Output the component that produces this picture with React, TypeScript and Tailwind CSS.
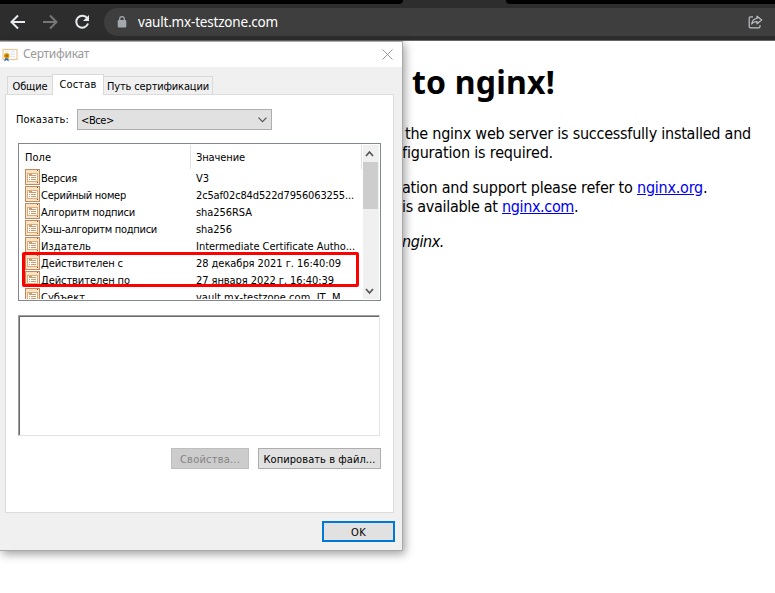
import { useLayoutEffect, useRef, useState } from "react";

// Text whose letter spacing is adjusted so that it fills a given width.
function Fit({ text, width, className = "" }: { text: string; width: number; className?: string }) {
  const ref = useRef<HTMLSpanElement>(null);
  const [spacing, setSpacing] = useState(0);
  useLayoutEffect(() => {
    const natural = ref.current!.getBoundingClientRect().width;
    setSpacing((width - natural) / text.length);
  }, [text, width]);
  return (
    <span ref={ref} className={"inline-block shrink-0 whitespace-pre " + className} style={{ letterSpacing: spacing }}>
      {text}
    </span>
  );
}

const rows: [string, number, string, number][] = [
  ["Версия", 36, "V3", 13],
  ["Серийный номер", 85, "2c5af02c84d522d7956063255...", 158],
  ["Алгоритм подписи", 94, "sha256RSA", 56],
  ["Хэш-алгоритм подписи", 116, "sha256", 36],
  ["Издатель", 50, "Intermediate Certificate Autho...", 159],
  ["Действителен с", 82, "28 декабря 2021 г. 16:40:09", 145],
  ["Действителен по", 89, "27 января 2022 г. 16:40:39", 138],
  ["Субъект", 44, "vault.mx-testzone.com, IT, M...", 154],
];

function FieldIcon() {
  return (
    <svg className="h-4 w-[15px] shrink-0" viewBox="0 0 15 16" shapeRendering="crispEdges">
      <rect width="15" height="16" rx="1" fill="#b98c63" />
      <rect x="1" y="1" width="13" height="2" fill="#ffe1bd" />
      <rect x="12" y="1" width="1" height="1" fill="#8e5128" />
      <rect x="1" y="3" width="13" height="12" fill="#fbe3c8" />
      <rect x="2" y="4" width="11" height="9" fill="#d9ab7b" />
      <rect x="3" y="5" width="9" height="7" fill="#fffaf2" />
      <path d="M4 5h3v1H4zM4 6h7v1H4zM4 8h1v1H4zM6 8h5v1H6zM4 10h1v1H4zM6 10h5v1H6z" fill="#c79b73" />
      <rect x="12" y="13" width="1" height="1" fill="#8e5128" />
    </svg>
  );
}

function CertificateIcon() {
  return (
    <svg className="mt-[6px] ml-[2px] h-[14px] w-4" viewBox="0 0 16 14">
      <rect x="1" y="1.5" width="14" height="10" fill="#fff" stroke="#e8c99c" strokeWidth="1.2" />
      <path d="M3 3.5h4M8.500 3.5H13M8 6h5M8 8.5h5" stroke="#e6e8ed" strokeWidth="1.3" />
      <path d="M3.4 8.500 2.200 13.500l2.300-1.500 2.300 1.500-.9-5z" fill="#286bc0" />
      <circle cx="4.7" cy="7.7" r="2.8" fill="#e0a000" />
      <circle cx="4.8" cy="7.8" r="1.4" fill="#a06a12" />
    </svg>
  );
}

function Toolbar() {
  return (
    <header className="h-[41px] bg-[#2d2d2d]">
      <div className="flex h-1 justify-between">
        <div className="w-[403px] rounded-br-[4px] bg-black" />
        <div className="w-[269px] rounded-bl-[4px] bg-black" />
      </div>
      <div className="flex h-[37px] items-center border-b border-[#666]">
        <svg className="ml-[10px] h-4 w-4" viewBox="0 0 16 16" fill="none" stroke="#e8eaed" strokeWidth="2">
          <path d="M15 8H2M8 1.5 1.5 8 8 14.5" />
        </svg>
        <svg className="ml-4 h-4 w-4" viewBox="0 0 16 16" fill="none" stroke="#777777" strokeWidth="2">
          <path d="M1 8h13M8 1.5 14.5 8 8 14.5" />
        </svg>
        <svg className="ml-4 h-4 w-4" viewBox="0 0 16 16">
          <path d="M13.2 4.2A6 6 0 1 0 14 9.5" fill="none" stroke="#e8eaed" strokeWidth="2" />
          <path d="M15 1v6H9z" fill="#e8eaed" />
        </svg>
        <div className="ml-[14px] flex h-7 flex-1 items-center rounded-l-full bg-[#3e3e3e]">
          <svg className="ml-[13px] h-3 w-[10px]" viewBox="0 0 10 12">
            <path d="M2.7 5V3a2.3 2.3 0 0 1 4.6 0v2" fill="none" stroke="#a4a8ad" strokeWidth="1.3" />
            <rect x=".7" y="4" width="8.6" height="7.5" rx="1" fill="#a4a8ad" />
          </svg>
          <Fit text="vault.mx-testzone.com" width={140} className="ml-[11px] font-['Noto_Sans'] text-[13.5px] leading-5 text-white" />
          <svg className="mr-[12px] ml-auto h-[14px] w-[15px]" viewBox="0 0 15 14" fill="none" stroke="#bfc1c4" strokeWidth="1.2" strokeLinejoin="round">
            <path d="M5 1.8H2.5Q1.2 1.8 1.2 3v8.5q0 1.3 1.3 1.3h8.2q1.3 0 1.3-1.3V10" />
            <path d="M9 1.2 13.7 5 9 8.8V6.7Q5.3 6.4 3.7 9q.5-4.9 5.3-5.5z" />
          </svg>
        </div>
      </div>
    </header>
  );
}

function PageText() {
  return (
    <main className="flex-1 pl-[402px] font-['DejaVu_Sans_Condensed','DejaVu_Sans',sans-serif] text-[16px] leading-[19px] text-black [font-stretch:condensed]">
      <h1 className="pt-[21px] pl-[10px] font-['Noto_Sans',sans-serif] text-[32px] leading-[39px] font-bold [font-stretch:normal]">
        <Fit text="to nginx!" width={143} />
      </h1>
      <p className="mt-[23px] flex flex-col items-start">
        <Fit text="the nginx web server is successfully installed and" width={346} className="ml-[3px]" />
        <Fit text="figuration is required." width={151} />
      </p>
      <p className="mt-4">
        <span className="flex">
          <Fit text="ation and support please refer to " width={235} />
          <a href="#" className="text-[#0000ee] underline"><Fit text="nginx.org" width={66} className="underline" /></a>.
        </span>
        <span className="flex">
          <Fit text="is available at " width={100} />
          <a href="#" className="text-[#0000ee] underline"><Fit text="nginx.com" width={72} className="underline" /></a>.
        </span>
      </p>
      <p className="mt-4 flex italic"><Fit text="nginx." width={42} /></p>
    </main>
  );
}

function Dialog() {
  return (
    <section className="absolute top-[41px] left-0 flex h-[510px] w-[403px] flex-col border-t border-r border-b border-[#a9a9a9] bg-[#f0f0f0] font-['DejaVu_Sans_Condensed','DejaVu_Sans',sans-serif] text-[11px] leading-[17px] text-black shadow-[2px_3px_9px_rgba(0,0,0,0.38)] [font-stretch:condensed]">
      <div className="flex h-[25px] shrink-0 bg-white">
        <CertificateIcon />
        <Fit text="Сертификат" width={66} className="ml-[5px] font-['Noto_Sans'] text-[12px] leading-[24px] text-[#999]" />
        <svg className="mt-[7px] mr-[9px] ml-auto h-[11px] w-[11px]" viewBox="0 0 11 11" stroke="#999" strokeWidth="1">
          <path d="m.5.5 10 10M10.500.5.5 10.5" />
        </svg>
      </div>
      <div className="relative z-10 mt-[7px] flex h-[21px] shrink-0 items-end pl-[7px]">
        <div className="mb-px flex h-[18px] w-[45px] justify-center border-t border-l border-[#d9d9d9] pt-px"><Fit text="Общие" width={35} /></div>
        <div className="flex h-[21px] w-[52px] justify-center border-x border-t border-[#d9d9d9] bg-white pt-px"><Fit text="Состав" width={37} /></div>
        <div className="mb-px flex h-[18px] w-[109px] justify-center border-t border-r border-[#d9d9d9] pt-px"><Fit text="Путь сертификации" width={102} /></div>
      </div>
      <div className="-mt-px ml-[5px] flex h-[419px] w-[389px] shrink-0 flex-col border border-[#dcdcdc] bg-white pl-[12px]">
        <div className="mt-[14px] flex h-[21px] items-center">
          <Fit text="Показать:" width={53} className="-ml-[2px]" />
          <div className="ml-[8px] flex h-[21px] w-[195px] items-center border border-[#adadad] bg-[#e1e1e1] pr-1 pl-[3px]">
            <Fit text="<Все>" width={33} className="pt-px" />
            <svg className="ml-auto h-[6px] w-[9px]" viewBox="0 0 9 6" fill="none" stroke="#555" strokeWidth="1.2"><path d="m.5.7 4 4 4-4" /></svg>
          </div>
        </div>
        <div className="relative mt-[13px] h-[158px] w-[363px] shrink-0 border border-[#828790]">
          <div className="flex h-[156px] p-px">
            <div className="h-full w-[343px] overflow-hidden">
              <div className="flex h-6">
                <div className="w-[171px] border-r border-[#e2e2e2] pt-[4px] pl-[5px]"><Fit text="Поле" width={26} /></div>
                <div className="w-[171px] border-r border-[#e2e2e2] pt-[4px] pl-[5px]"><Fit text="Значение" width={49} /></div>
              </div>
              {rows.map(([name, nameWidth, value, valueWidth]) => (
                <div key={name} className="flex h-[17px] pl-[5px]">
                  <FieldIcon />
                  <div className="w-[156px] pt-px pl-px"><Fit text={name} width={nameWidth} /></div>
                  <div className="pt-px"><Fit text={value} width={valueWidth} /></div>
                </div>
              ))}
            </div>
            <div className="flex w-4 flex-col items-start bg-[#f0f0f0]">
              <svg className="ml-[2px] h-[17px] w-[9px]" viewBox="0 0 9 17" fill="none" stroke="#555" strokeWidth="1.7"><path d="m1 11 3.500-4L8 11" /></svg>
              <div className="h-[47px] w-[15px] bg-[#cdcdcd]" />
              <svg className="mt-auto ml-[2px] h-[17px] w-[9px]" viewBox="0 0 9 17" fill="none" stroke="#555" strokeWidth="1.7"><path d="m1 7 3.500 4L8 7" /></svg>
            </div>
          </div>
          <div className="absolute top-[108px] left-[3px] h-[35px] w-[337px] rounded-[2px] border-[3px] border-[#fe0000]" />
        </div>
        <div className="mt-[14px] h-[121px] w-[362px] shrink-0 border-t border-r border-b border-l border-t-[#a0a0a0] border-r-[#e3e3e3] border-b-[#e3e3e3] border-l-[#a0a0a0]">
          <div className="h-full w-full border-t border-l border-[#696969]" />
        </div>
        <div className="mt-[12px] flex gap-[9px] pl-[153px]">
          <div className="flex h-[21px] w-[78px] items-center justify-center border border-[#bfbfbf] bg-[#cccccc] text-[#858585]"><Fit text="Свойства..." width={60} className="pt-px" /></div>
          <div className="flex h-[21px] w-[123px] items-center justify-center border border-[#adadad] bg-[#e1e1e1]"><Fit text="Копировать в файл..." width={112} className="pt-px" /></div>
        </div>
      </div>
      <div className="mt-[8px] ml-[322px] flex h-[21px] w-[73px] shrink-0 items-center justify-center border-2 border-[#0078d7] bg-[#e1e1e1]"><Fit text="OK" width={15} className="pt-px" /></div>
    </section>
  );
}

export default function App() {
  return (
    <div className="relative flex h-[593px] w-[775px] flex-col overflow-hidden bg-white">
      <Toolbar />
      <PageText />
      <Dialog />
    </div>
  );
}
